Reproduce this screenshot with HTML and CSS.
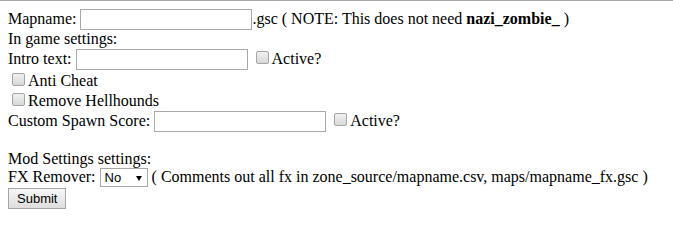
FILE: index.html
```html
<!DOCTYPE html>
<html lang="en">
<head>
  <meta charset="UTF-8" />
  <title>Mod Settings</title>
  <link rel="stylesheet" href="styles.css">
</head>
<body>
  <form class="settings" onsubmit="return false">
    Mapname: <input type="text" name="mapname">.gsc ( NOTE: This does not need <b>nazi_zombie_</b> )<br>
    In game settings:<br>
    Intro text: <input type="text" name="intro"> <input type="checkbox" name="intro_active">Active?<br>
    <input type="checkbox" name="anticheat">Anti Cheat<br>
    <input type="checkbox" name="hellhounds">Remove Hellhounds<br>
    Custom Spawn Score: <input type="text" name="spawnscore"> <input type="checkbox" name="spawn_active">Active?<br>
    <br>
    Mod Settings settings:<br>
    FX Remover: <span class="select-wrap"><select name="fxremover">
      <option>No</option>
      <option>Yes</option>
    </select></span> ( Comments out all fx in zone_source/mapname.csv, maps/mapname_fx.gsc )<br>
    <input type="submit" value="Submit">
  </form>
</body>
</html>
```

FILE: styles.css
```css
html {
  border-top: 1px solid #a8a8a8;
  background: #fff;
}
body {
  margin: 8px;
  font-family: "Liberation Serif", "Times New Roman", serif;
  font-size: 16px;
  color: #000;
}
.settings input[type="text"] {
  width: 166px;
  font-family: "Liberation Sans", Arial, sans-serif;
  font-size: 13px;
  border: 1px solid #a9a9a9;
  padding: 2px 2px;
  height: 15px;
}
.settings input[type="checkbox"] {
  -webkit-appearance: none;
  appearance: none;
  box-sizing: border-box;
  width: 13px;
  height: 13px;
  margin: 3px 3px 0 4px;
  border: 1px solid #a5a5a5;
  border-radius: 2px;
  background: linear-gradient(#f0f0f0, #d8d8d8);
}
.select-wrap {
  position: relative;
  display: inline-block;
}
.select-wrap::after {
  content: "";
  position: absolute;
  right: 6px;
  top: 8px;
  border-left: 3px solid transparent;
  border-right: 3px solid transparent;
  border-top: 5px solid #000;
  pointer-events: none;
}
.settings select {
  -webkit-appearance: none;
  appearance: none;
  width: 48px;
  height: 19px;
  padding: 0 0 0 4px;
  border: 1px solid #a9a9a9;
  border-radius: 0;
  background: #fff;
  font-family: "Liberation Sans", Arial, sans-serif;
  font-size: 13px;
  color: #000;
}
.settings input[type="submit"] {
  font-family: "Liberation Sans", Arial, sans-serif;
  font-size: 13px;
  margin-top: 1px;
  padding: 2px 8px;
  border: 1px solid #a5a5a5;
  border-radius: 0;
  background: linear-gradient(#f6f6f6, #dedede);
}
```
